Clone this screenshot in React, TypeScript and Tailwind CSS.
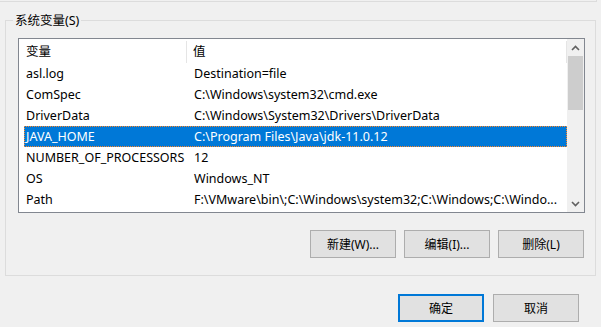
import React from "react";

const rows = [
  { name: "asl.log", value: "Destination=file" },
  { name: "ComSpec", value: "C:\\Windows\\system32\\cmd.exe" },
  { name: "DriverData", value: "C:\\Windows\\System32\\Drivers\\DriverData" },
  { name: "JAVA_HOME", value: "C:\\Program Files\\Java\\jdk-11.0.12", selected: true },
  { name: "NUMBER_OF_PROCESSORS", value: "12" },
  { name: "OS", value: "Windows_NT" },
  {
    name: "Path",
    value: "F:\\VMware\\bin\\;C:\\Windows\\system32;C:\\Windows;C:\\Windo...",
  },
];

function Chevron({ down }: { down?: boolean }) {
  return (
    <svg width="9" height="6" viewBox="0 0 9 6" className={down ? "rotate-180" : ""}>
      <path d="M1 5 L4.5 1.5 L8 5" fill="none" stroke="#606060" strokeWidth="1.6" />
    </svg>
  );
}

function WinButton({ label, primary }: { label: string; primary?: boolean }) {
  return (
    <button
      className={`flex h-[28px] w-[86px] items-center justify-center bg-[#e1e1e1] pt-[1px] text-[12px] text-black ${
        primary ? "border-2 border-[#0078d7]" : "border border-[#adadad]"
      }`}
    >
      {label}
    </button>
  );
}

export default function App() {
  return (
    <div
      className="relative h-[327px] w-[601px] overflow-hidden bg-[#f0f0f0] text-[12.5px] text-black"
      style={{ fontFamily: '"Noto Sans", "Noto Sans CJK SC", sans-serif' }}
    >
      {/* bottom of the group above */}
      <div className="h-[2px] w-[597px] border-b border-r border-[#dcdcdc]" />

      {/* 系统变量 group */}
      <div className="relative ml-[5px] mt-[18px] h-[256px] w-[591px] border border-[#dcdcdc]">
        <span className="absolute left-[7px] top-[-8px] bg-[#f0f0f0] px-[2px] leading-[16px]">
          系统变量(S)
        </span>

        <div className="ml-[12px] mt-[17px] flex h-[175px] w-[567px] border border-[#828790] bg-white">
          <div className="flex-1 pl-[5px]">
            {/* header */}
            <div className="flex h-[24px] items-center pt-[2px]">
              <div className="flex h-full w-[163px] items-center border-r border-[#e5e5e5] pl-[2px]">
                变量
              </div>
              <div className="flex h-full flex-1 items-center border-r border-[#e5e5e5] pl-[6px]">
                值
              </div>
            </div>
            {rows.map((r) => (
              <div
                key={r.name}
                className={`flex h-[21px] items-center whitespace-nowrap pt-[2px] ${
                  r.selected
                    ? "border border-dotted border-[#ff8728] bg-[#0078d7] text-white"
                    : "border border-transparent"
                }`}
              >
                <div className="w-[162px] pl-[1px]">{r.name}</div>
                <div className="pl-[7px]">{r.value}</div>
              </div>
            ))}
          </div>

          {/* scrollbar */}
          <div className="flex w-[17px] flex-col bg-[#f0f0f0]">
            <div className="flex h-[17px] items-center justify-center">
              <Chevron />
            </div>
            <div className="flex-1 px-[1px]">
              <div className="h-[54px] bg-[#cdcdcd]" />
            </div>
            <div className="flex h-[17px] items-center justify-center">
              <Chevron down />
            </div>
          </div>
        </div>

        <div className="mr-[11px] mt-[17px] flex justify-end gap-[8px]">
          <WinButton label="新建(W)..." />
          <WinButton label="编辑(I)..." />
          <WinButton label="删除(L)" />
        </div>
      </div>

      <div className="mr-[22px] mt-[18px] flex justify-end gap-[9px]">
        <WinButton label="确定" primary />
        <WinButton label="取消" />
      </div>
    </div>
  );
}
